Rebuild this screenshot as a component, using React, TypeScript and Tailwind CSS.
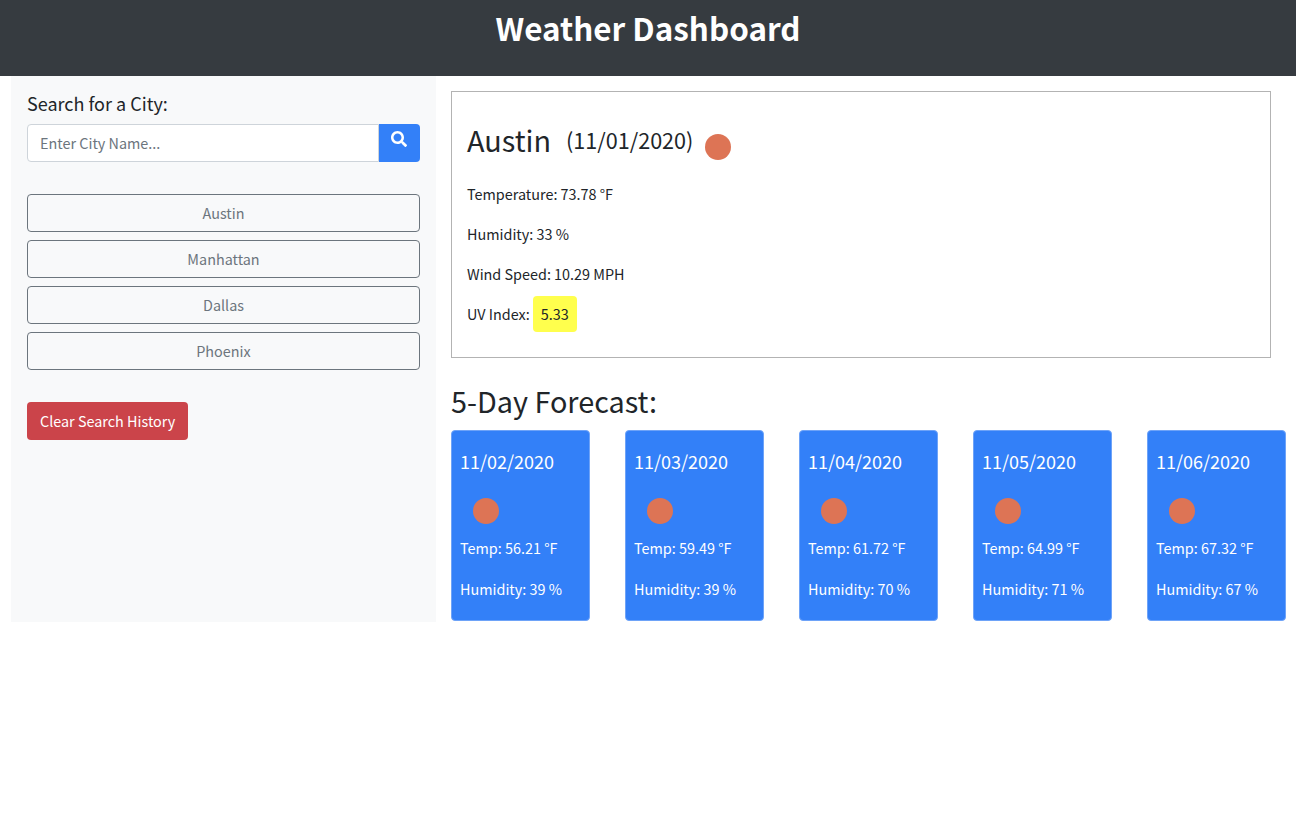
import { FaSearch } from "react-icons/fa";

const cities = ["Austin", "Manhattan", "Dallas", "Phoenix"];

const forecast = [
  { date: "11/02/2020", temp: "56.21", humidity: 39 },
  { date: "11/03/2020", temp: "59.49", humidity: 39 },
  { date: "11/04/2020", temp: "61.72", humidity: 70 },
  { date: "11/05/2020", temp: "64.99", humidity: 71 },
  { date: "11/06/2020", temp: "67.32", humidity: 67 },
];

function Sun() {
  return <div className="w-[26px] h-[26px] rounded-full bg-[#dd7455] blur-[0.5px]" />;
}

export default function App() {
  return (
    <div className="min-h-[826px] bg-white text-[#212529] font-['Noto_Sans_CJK_SC','Liberation_Sans',sans-serif] text-[14.4px] leading-6">
      <header className="h-[76px] bg-[#363b40] pt-[7px] text-center">
        <h1 className="text-[31.4px] leading-[42px] font-bold text-white">Weather Dashboard</h1>
      </header>

      <div className="flex items-start pl-[11px]">
        {/* Sidebar */}
        <aside className="w-[425px] h-[546px] bg-[#f8f9fa] px-4 pt-[15px]">
          <p className="text-[18px] leading-[24px] mb-[9px]">Search for a City:</p>
          <div className="flex h-[38px]">
            <input
              className="flex-1 min-w-0 bg-white border border-[#ced4da] rounded-l px-3 text-[14.4px] placeholder:text-[#6c757d] outline-none"
              placeholder="Enter City Name..."
            />
            <button className="w-[41px] bg-[#3380f8] rounded-r flex justify-center pt-[7px] pr-[1px] text-white">
              <FaSearch className="w-4 h-4" />
            </button>
          </div>
          <div className="mt-8 flex flex-col gap-2">
            {cities.map((city) => (
              <button
                key={city}
                className="h-[38px] border border-[#6c757d] rounded text-[#6c757d] text-[14.4px] text-center"
              >
                {city}
              </button>
            ))}
          </div>
          <button className="mt-8 h-[38px] px-[13px] bg-[#cb444a] rounded text-white text-[14.4px]">
            Clear Search History
          </button>
        </aside>

        {/* Main */}
        <main className="ml-[15px] flex-1 min-w-0">
          <section className="mt-[15px] w-[820px] h-[267px] border border-[#b3b3b3] px-[15px] pt-[29px]">
            <h2 className="flex items-start text-[28.8px] leading-[38px]">
              Austin
              <span className="ml-[15px] text-[21.6px] leading-[38px]">(11/01/2020)</span>
              <span className="ml-[12px] mt-[13px]">
                <Sun />
              </span>
            </h2>
            <p className="mt-[22px]">Temperature: 73.78 °F</p>
            <p className="mt-4">Humidity: 33 %</p>
            <p className="mt-4">Wind Speed: 10.29 MPH</p>
            <p className="mt-[10px] flex items-center">
              UV Index:
              <span className="ml-[3px] h-9 px-2 flex items-center bg-[#ffff4d] rounded">5.33</span>
            </p>
          </section>

          <h3 className="mt-[24px] text-[28.8px] leading-[38px]">5-Day Forecast:</h3>
          <div className="mt-[10px] flex gap-[35px]">
            {forecast.map((day) => (
              <div
                key={day.date}
                className="w-[139px] h-[191px] shrink-0 bg-[#3380f8] border border-[#6ea3f8] rounded text-white pl-[8px] pt-[18px]"
              >
                <p className="text-[18px] leading-[24px]">{day.date}</p>
                <div className="mt-[25px] ml-[12.5px]">
                  <Sun />
                </div>
                <p className="mt-[12px]">Temp: {day.temp} °F</p>
                <p className="mt-[17px]">Humidity: {day.humidity} %</p>
              </div>
            ))}
          </div>
        </main>
      </div>
    </div>
  );
}
